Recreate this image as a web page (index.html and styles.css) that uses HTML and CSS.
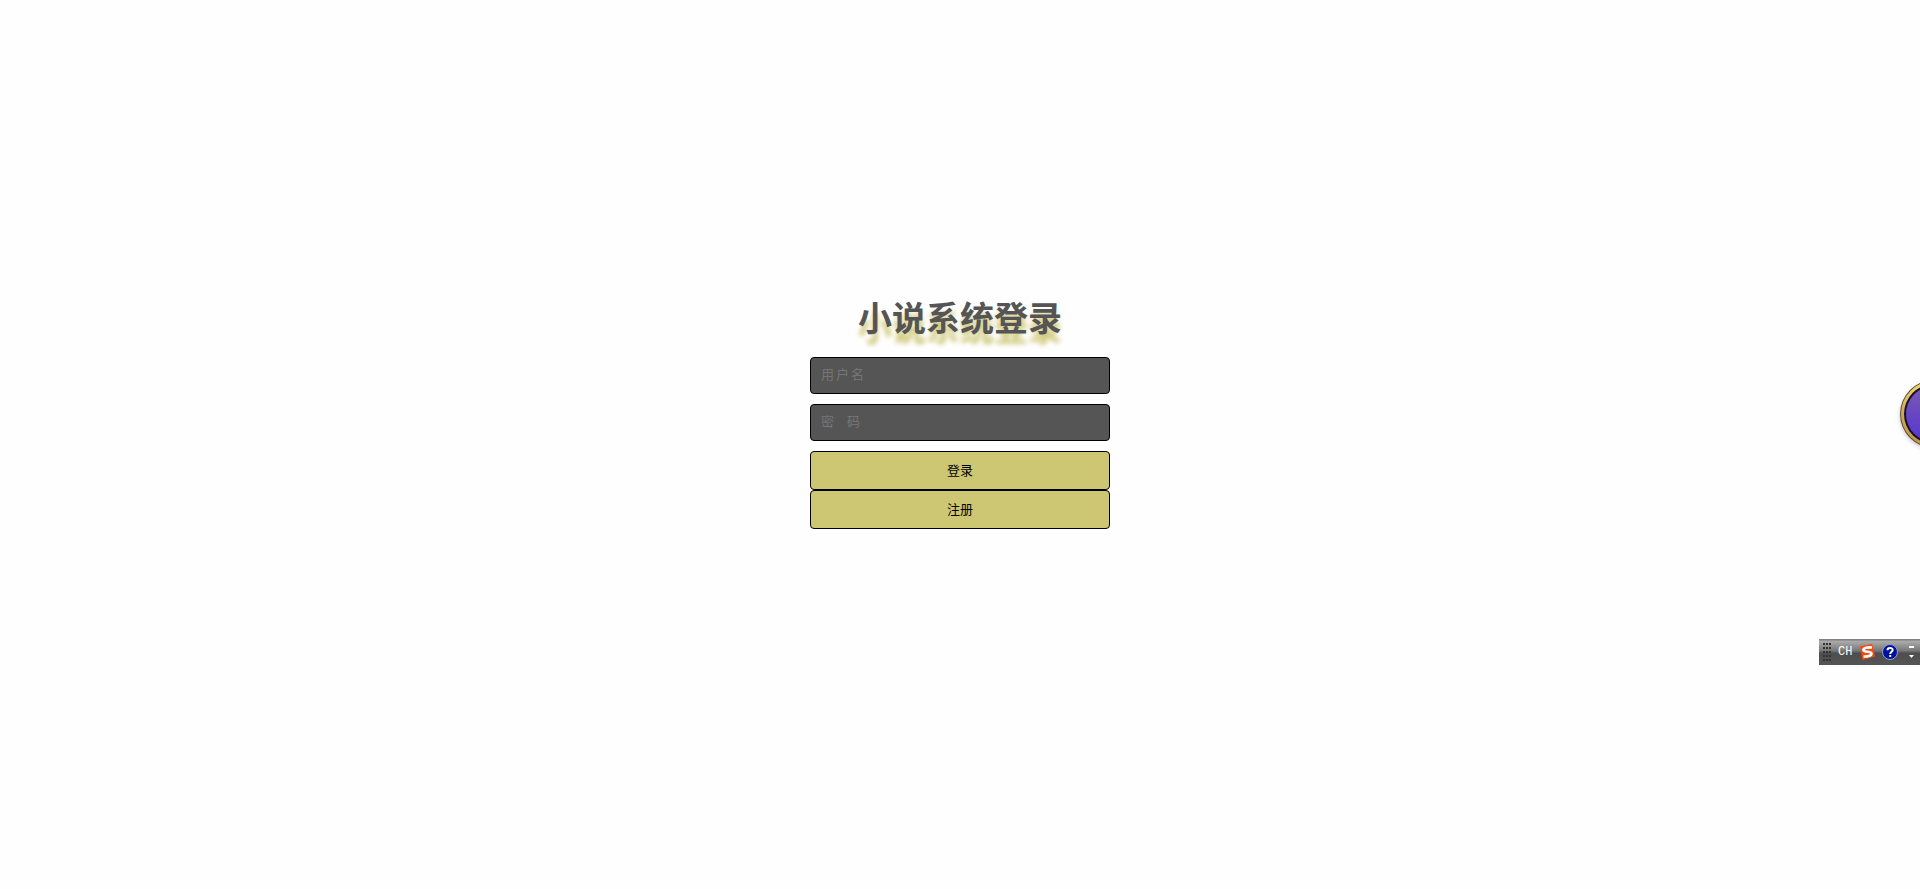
FILE: index.html
```html
<!DOCTYPE html>
<html lang="zh-CN">
<head>
<meta charset="utf-8">
<title>小说系统登录</title>
<link rel="stylesheet" href="styles.css">
</head>
<body>
<main class="page">
  <form class="login">
    <h1 class="title">小说系统登录</h1>
    <input class="field field-user" type="text" aria-label="用户名" placeholder="用户名">
    <input class="field" type="password" aria-label="密码" placeholder="密　码">
    <button class="btn" type="submit">登录</button>
    <button class="btn" type="button">注册</button>
  </form>
</main>
<button class="orb" type="button" aria-label="悬浮球">
  <svg width="24" height="80" viewBox="0 0 24 80" aria-hidden="true">
    <defs>
      <linearGradient id="gold" x1="0" y1="0" x2="0" y2="1"><stop offset="0" stop-color="#f6d96e"/><stop offset=".5" stop-color="#d0a850"/><stop offset="1" stop-color="#c09444"/></linearGradient>
      <linearGradient id="violet" x1="0" y1="0" x2="0" y2="1"><stop offset="0" stop-color="#7a5cb4"/><stop offset=".5" stop-color="#6747c0"/><stop offset="1" stop-color="#5535d4"/></linearGradient>
      <filter id="soft" x="-20%" y="-20%" width="140%" height="140%"><feGaussianBlur stdDeviation="2"/></filter>
    </defs>
    <circle cx="38" cy="40" r="34" fill="#000" opacity=".2" filter="url(#soft)"/>
    <circle cx="38" cy="38" r="34" fill="#5a4c3c"/>
    <circle cx="38" cy="38" r="33" fill="url(#gold)"/>
    <circle cx="38" cy="38" r="30" fill="#17102a"/>
    <circle cx="38" cy="38" r="28" fill="url(#violet)"/>
  </svg>
</button>
<div class="langbar">
  <svg width="8" height="18" viewBox="0 0 8 18" fill="#333" aria-hidden="true">
    <path d="M0 0h2v2H0zM3 0h2v2H3zM6 0h2v2H6zM0 4h2v2H0zM3 4h2v2H3zM6 4h2v2H6zM0 8h2v2H0zM3 8h2v2H3zM6 8h2v2H6zM0 12h2v2H0zM3 12h2v2H3zM6 12h2v2H6zM0 16h2v2H0zM3 16h2v2H3zM6 16h2v2H6z"/>
  </svg>
  <span class="lang">CH</span>
  <svg width="16" height="16" viewBox="0 0 16 16" aria-hidden="true">
    <path d="M1 2.500 13 0l3 12.500L3.500 16z" fill="#f8480c"/>
    <path d="M13 3.500C9 3 4 4 4.500 6.200S12.500 7 12.500 9.500 8 12.800 4.500 12.500" fill="none" stroke="#fff" stroke-width="2.600"/>
  </svg>
  <svg width="16" height="16" viewBox="0 0 16 16" aria-hidden="true">
    <circle cx="8" cy="8" r="7.500" fill="#00129c" stroke="#8fa0d8"/>
    <path d="M5.500 6.200C5.500 3.300 10.700 3.300 10.700 6c0 1.800-2.500 1.800-2.500 4M8.200 11v2" fill="none" stroke="#fff" stroke-width="2"/>
  </svg>
  <svg class="more" width="6" height="14" viewBox="0 0 6 14" fill="#fff" aria-hidden="true"><path d="M0 1h5v2H0zM0 10h5L2.500 13z"/></svg>
</div>
</body>
</html>
```
FILE: styles.css
```css
body {
  margin: 0;
  background: #fefefe;
  font-family: "Noto Sans CJK SC", sans-serif;
  overflow: hidden;
}

.page {
  min-height: 100vh;
  display: flex;
  align-items: center;
  justify-content: center;
}

.login {
  width: 300px;
  min-height: 300px;
  display: flex;
  flex-direction: column;
}

.title {
  margin: 0 0 18px;
  color: #555;
  font-size: 34px;
  line-height: 44px;
  text-align: center;
  text-shadow: 0 10px 5px #cdc673;
}

.field,
.btn {
  box-sizing: border-box;
  border: 1px solid #000;
  border-radius: 4px;
  font-family: inherit;
  font-size: 13px;
}

.field {
  height: 37px;
  margin: 0 0 10px;
  padding: 0 10px 4px;
  background: #555;
  color: #fff;
}

.field::placeholder {
  color: #757575;
}

.field-user {
  letter-spacing: 2px;
}

.btn {
  height: 39px;
  padding: 0 0 2px;
  background: #cdc673;
  color: #000;
}

.orb {
  position: absolute;
  right: 0;
  top: 376px;
  padding: 0;
  border: 0;
  background: none;
}

.orb svg {
  display: block;
}

.langbar {
  position: absolute;
  right: 0;
  top: 639px;
  width: 101px;
  height: 26px;
  box-sizing: border-box;
  padding: 0 5px 0 4px;
  display: flex;
  align-items: center;
  gap: 7px;
  background: linear-gradient(#777 0, #aaa 10%, #777 45%, #4e4e4e 55%, #555 100%);
}

.lang {
  color: #fff;
  font: 12px/16px "Liberation Mono", monospace;
}

.more {
  margin-left: auto;
}
```
